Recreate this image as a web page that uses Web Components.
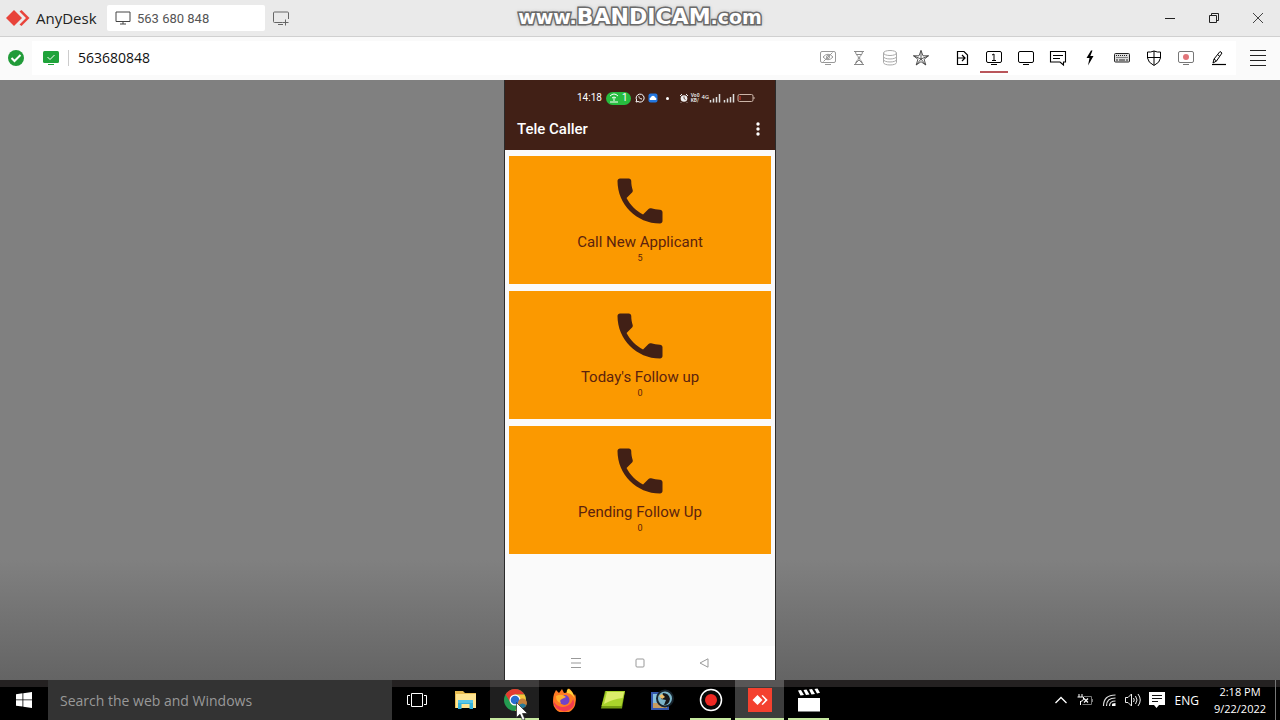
<!DOCTYPE html>
<html lang="en">
<head>
<meta charset="utf-8">
<title>AnyDesk - 563680848</title>
<style>
html, body { margin: 0; height: 100%; }
body { font-family: "Open Sans", "Noto Sans", sans-serif; color: #111; overflow: hidden; background: #808080; }
</style>
</head>
<body>
<remote-desktop></remote-desktop>
<script>
const ICONS = {
  logo: ['0 0 24 16', '<path d="M8 0l8 8-8 8-8-8z" fill="#e8433a"/><path d="M13.500 1.500l2-1.500 8 8-8 8-2-1.500L20 8z" fill="#e8433a"/>'],
  logowhite: ['0 0 24 24', '<path d="M0 0h24v24H0z" fill="#f4412f"/><path d="M9.500 7l5 5-5 5-5-5zM13.500 7.800l1.200-.8 5 5-5 5-1.200-.8L17.300 12z" fill="#fff"/>'],
  monitor: ['0 0 16 14', '<path d="M1 1h14v9.500H1zM8 10.500V13M5 13h6" fill="none" stroke="#444"/>'],
  newtab: ['0 0 16 15', '<path d="M9.500 11.500H1.500a1 1 0 0 1-1-1V2a1 1 0 0 1 1-1h13a1 1 0 0 1 1 1v6M5 13.500h5M12.500 8.500v6M9.500 11.500h6" fill="none" stroke="#666"/>'],
  minimise: ['0 0 12 12', '<path d="M1 6.500h10" stroke="#222" fill="none"/>'],
  restore: ['0 0 12 12', '<path d="M1.500 3.500h7v7h-7zM3.500 3.500v-2h7v7h-2" stroke="#222" fill="none"/>'],
  close: ['0 0 12 12', '<path d="M1 1l10 10M11 1L1 11" stroke="#444" fill="none"/>'],
  ok: ['0 0 16 16', '<circle cx="8" cy="8" r="8" fill="#219b39"/><path d="M3.500 8l3 3 6-6" fill="none" stroke="#fff" stroke-width="2"/>'],
  session: ['0 0 16 14', '<rect width="16" height="12" rx="1.500" fill="#1fa33a"/><path d="M5 13.500h6" stroke="#1fa33a"/><path d="M4.500 6l2.500 2.500L11.500 4" fill="none" stroke="#fff"/>'],
  hide: ['0 0 18 18', '<g fill="none" stroke="#999"><rect x="1.500" y="2.500" width="15" height="11" rx="1.500"/><path d="M6 15.500h6M4 8q5-5.500 10 0-5 5.500-10 0M4.500 12.500l9-9"/><circle cx="9" cy="8" r="1.500"/></g>'],
  hourglass: ['0 0 18 18', '<g fill="none" stroke="#888"><path d="M4 2.500h10M4 15.500h10M5.500 2.500c0 4 3 4 3 6.500s-3 2.500-3 6.500M12.500 2.500c0 4-3 4-3 6.500s3 2.500 3 6.500M7 5.500h4M6 14l3-3 3 3"/></g>'],
  disks: ['0 0 18 18', '<g fill="none" stroke="#aaa"><ellipse cx="9" cy="4" rx="6.500" ry="2.500"/><path d="M2.500 4v9.500c0 3.300 13 3.300 13 0V4M2.500 7.500c0 3.300 13 3.300 13 0M2.500 10.500c0 3.300 13 3.300 13 0"/></g>'],
  star: ['0 0 18 18', '<path d="M9 1.500l2 5.300h5.500l-4.400 3.500 1.700 5.700L9 12.700 4.200 16l1.700-5.700L1.500 6.800H7zM9 1.500v8.500l7.500-3.200M9 10l4.800 6M9 10l-4.800 6M9 10L1.500 6.800" fill="none" stroke="#444" stroke-width=".9"/>'],
  file: ['0 0 18 18', '<path d="M4.500 2.500h6.500l3.500 3.500v9.500h-10zM5 9h7M9 6l3 3-3 3" fill="none" stroke="#000" stroke-width="1.200"/>'],
  screenone: ['0 0 18 18', '<rect x="1.500" y="2.500" width="15" height="11" rx="1.500" fill="none" stroke="#000"/><path d="M6 15.500h6M7 6l2-1v6.500M7 11.500h4" fill="none" stroke="#000"/>'],
  screen: ['0 0 18 18', '<rect x="1.500" y="2.500" width="15" height="11" rx="1.500" fill="none" stroke="#000"/><path d="M6 15.500h6" stroke="#000"/>'],
  chat: ['0 0 18 18', '<path d="M1.500 2.500h15v10.500h-2v3l-3.500-3H1.500zM4 6.500h10M4 9.500h7" fill="none" stroke="#000" stroke-width="1.100"/>'],
  bolt: ['0 0 18 18', '<path d="M10 1.500L5.500 9h3L7 16.500 12.500 7H9.300l2.200-5.500z" fill="#000"/>'],
  keyboard: ['0 0 18 18', '<rect x="1.500" y="4.500" width="15" height="8.500" rx="1" fill="#ddd" stroke="#222"/><path d="M3 6.500h12M3.500 8.500h12" stroke="#222" stroke-dasharray="1 1"/><path d="M3 11h2M6 11h6M13 11h2" stroke="#222"/>'],
  shield: ['0 0 18 18', '<path d="M9 2Q5.500 3.500 2.500 3v6q.5 4.500 6.500 7.500 6-3 6.500-7.500V3Q12.500 3.500 9 2zM9 2v14M2.500 8.500h13" fill="none" stroke="#000"/>'],
  record: ['0 0 18 18', '<rect x="1.500" y="2.500" width="15" height="11" rx="1.500" fill="none" stroke="#777"/><path d="M6 15.500h6" stroke="#777"/><circle cx="9" cy="8" r="3" fill="#e2757a"/>'],
  pen: ['0 0 18 18', '<path d="M3 15.500h14" stroke="#000" stroke-width="1.200"/><path d="M4 14l1-4 6-7.500 2 1.500-5.500 8z M5 10l2.500 2M9 6l1.500 1" fill="none" stroke="#000"/>'],
  menu: ['0 0 16 16', '<path d="M0 .5h16M0 5.500h16M0 10.500h16M0 15.500h16" stroke="#222"/>'],
  hotspot: ['0 0 10 10', '<path d="M1 3q4-4 8 0M3 5q2-2 4 0M5 5v3M1 9h8" fill="none" stroke="#fff"/>'],
  whatsapp: ['0 0 10 10', '<path d="M1 9l.6-2A4 4 0 1 1 3 8.500z" fill="none" stroke="#fff"/><path d="M3.500 3q-.5 2 3 3.700l.5-1-1-.7-.6.4-1-1 .3-.6z" fill="#fff"/>'],
  cloud: ['0 0 10 10', '<rect x=".5" y=".5" width="9" height="9" rx="2" fill="#2376df"/><path d="M2 7a1.500 1.500 0 0 1 .8-2.500 2.300 2.300 0 0 1 4.400 0A1.500 1.500 0 0 1 8 7z" fill="#fff"/>'],
  alarm: ['0 0 10 10', '<circle cx="5" cy="5.500" r="3.300" fill="#eee"/><path d="M1 3l2-2M7 1l2 2M2.500 9L2 9.500M7.500 9l.5.5" stroke="#eee"/><path d="M5 3.500v2l1.500 1" stroke="#412016" fill="none" stroke-width=".8"/>'],
  signal: ['0 0 12 10', '<path d="M1.500 7v2.500M4.500 5.500v4M7.500 4v5.500M10.500 1v8.500" stroke="#ddd" stroke-width="1.500"/>'],
  battery: ['0 0 18 10', '<rect x="1" y="1.500" width="15" height="7" rx="1.500" fill="none" stroke="#ccb5a8"/><path d="M3 3v4" stroke="#e13a2b"/><path d="M17 4v2" stroke="#ccb5a8"/>'],
  more: ['0 0 6 14', '<g fill="#fff"><circle cx="3" cy="2" r="1.700"/><circle cx="3" cy="7" r="1.700"/><circle cx="3" cy="12" r="1.700"/></g>'],
  phone: ['0 0 24 24', '<path fill="#412016" d="M6.620 10.790c1.440 2.830 3.760 5.140 6.590 6.590l2.200-2.200c.27-.27.67-.36 1.020-.24 1.120.37 2.330.57 3.570.57.55 0 1 .45 1 1V20c0 .55-.45 1-1 1-9.390 0-17-7.610-17-17 0-.55.45-1 1-1h3.500c.55 0 1 .45 1 1 0 1.250.2 2.450.57 3.570.11.35.03.74-.25 1.020l-2.200 2.200z"/>'],
  recents: ['0 0 10 10', '<path d="M0 .5h10M0 5h10M0 9.500h10" stroke="#999"/>'],
  home: ['0 0 10 10', '<rect x="1" y="1" width="8" height="8" rx="1" fill="none" stroke="#999"/>'],
  back: ['0 0 10 10', '<path d="M9 .8v8.400L1 5z" fill="none" stroke="#999"/>'],
  windows: ['0 0 16 16', '<path d="M0 2.200l6.500-.9v6.200H0zM7.300 1.200L16 0v7.500H7.300zM0 8.300h6.500v6.300L0 13.700zM7.300 8.300H16V16l-8.700-1.200z" fill="#fff"/>'],
  taskview: ['0 0 20 16', '<path d="M4.500 1.500h11v13h-11zM3 3.500H.5v9H3M17 3.500h2.500v9H17" fill="none" stroke="#fff"/>'],
  explorer: ['0 0 24 22', '<path d="M1 2h8l2 2h11v15H1z" fill="#e9bd51"/><path d="M2 5h20v14H2z" fill="#ffe592"/><path d="M4 20v-8q0-1 1-1h13q1 0 1 1v8h-3.500v-5h-8v5z" fill="#35b2dc"/><path d="M4 11h15v3H4z" fill="#56c6e8"/>'],
  chrome: ['0 0 24 24', '<circle cx="12" cy="12" r="11" fill="#249b50"/><path d="M2.500 6.500A11 11 0 0 1 21.500 6.500H12L7.500 14.500z" fill="#e43c30"/><path d="M21.500 6.500A11 11 0 0 1 12 23l5-8-5-8.500z" fill="#f7c53a"/><circle cx="12" cy="12" r="5.500" fill="#fff"/><circle cx="12" cy="12" r="4.300" fill="#286dcf"/><circle cx="19.500" cy="15" r="4.500" fill="#c6803b"/><path d="M16 17q3.500-3 7 0-1 3-3.500 3T16 17" fill="#267a9c"/>'],
  firefox: ['0 0 24 24', '<path d="M2 6l2-4 3 3 3-4 2 4q2 0 3-1l2-3.500q4 3 5 7.500l1-2q1.500 4 .5 8.500A11 11 0 0 1 1 13Q1 9 2 6z" fill="#ff7a22"/><path d="M1.200 12q2 6 9 7 8 0 11-8 4 10-8.700 12.500Q1.500 22 1.200 12z" fill="#f23c50"/><path d="M16 .5q6 4 6.500 10-2-5-7.500-5.500-1-2 1-4.500z" fill="#ffd439"/><circle cx="12.500" cy="12" r="5" fill="#7143c9"/><path d="M4 8q6-3 10 1l-4 2q-3 1-1 4-5-1-5-7z" fill="#ffb02e"/>'],
  notes: ['0 0 26 22', '<path d="M5 2h20l-3 17.500H1z" fill="#759c13"/><path d="M6 2h19l-3.500 15H1.500z" fill="#a9d32b"/><path d="M7 3h17l-1.500 6Q13 10 4 15z" fill="#dcec6a"/>'],
  viewer: ['0 0 24 24', '<path d="M1 4h18v18H1z" fill="#3457ad"/><path d="M3 6h14v14H3z" fill="#86bfdc"/><path d="M3 15h14v5H3z" fill="#c79c61"/><circle cx="15" cy="10.500" r="8" fill="#7bb5c9" stroke="#17242e" stroke-width="2"/><path d="M13 5q6 0 7 6-1 6-6 6l2-5-5-1z" fill="#161719"/><path d="M9 8l3-2 3 3-3 2z" fill="#edc06b"/>'],
  recorder: ['0 0 24 24', '<circle cx="12" cy="12" r="10.500" fill="#090909" stroke="#fff" stroke-width="1.500"/><circle cx="12" cy="12" r="6" fill="#ef2823"/>'],
  clapper: ['0 0 24 24', '<path d="M1 10h22v13.500H1zM1 2.500l3-.5 3 5-3.500.5zM6.500 2l3-.4 3 5-3.500.4zM12 1.500l3-.4 3 5-3.500.4zM17.500 1l3-.4L23 4.800l-3 .7z" fill="#fff"/>'],
  chevron: ['0 0 16 16', '<path d="M2.500 11L8 5.500l5.500 5.500" fill="none" stroke="#fff" stroke-width="1.300"/>'],
  power: ['0 0 16 16', '<path d="M2 2v3M5 2v3M.5 5h6v2q0 2-3 2.500V13M3.500 9v3" fill="none" stroke="#fff"/><path d="M7 4.500h7.500v8H5.500M15.500 7v3" fill="none" stroke="#777"/><path d="M7 6.500l4 4M11 6.500l-4 4" stroke="#fff" stroke-width="1.200"/>'],
  wifi: ['0 0 16 16', '<g fill="none" stroke="#ddd" stroke-width="1.200"><path d="M2.500 14Q2.500 3 14.500 3M5.500 14Q5.500 6 14.500 6M8.500 14q0-5 6-5"/></g><path d="M11 14v-1.500q0-1.500 3.500-1.500v3z" fill="#fff"/>'],
  speaker: ['0 0 16 16', '<g fill="none" stroke="#eee"><path d="M.5 5.500h2.500l3.500-3.500v12L3 10.500H.5zM8.500 6q1.500 2 0 4M10.500 4q3 4 0 8M13 2q4.500 6 0 12"/></g>'],
  message: ['0 0 16 16', '<path d="M0 0h16v13h-6l-2.500 3L5 13H0z" fill="#fff"/><path d="M3 3.500h10M3 6.500h10M3 9.500h6" stroke="#111"/>'],
  cursor: ['0 0 12 19', '<path d="M.5 .5v15l3.500-3.200 2.500 6 2.500-1-2.500-5.800h5z" fill="#fff" stroke="#222" stroke-width=".7"/>']
};

const define = (tag, markup, setup) => {
  const template = document.createElement('template');
  template.innerHTML = markup;
  customElements.define(tag, class extends HTMLElement {
    constructor() {
      super();
      this.attachShadow({ mode: 'open' }).append(template.content.cloneNode(true));
    }
    connectedCallback() { if (setup) setup(this, this.shadowRoot); }
  });
};

const makeIcon = (name) => {
  const icon = document.createElement('ui-icon');
  icon.setAttribute('name', name);
  return icon;
};

define('ui-icon', '<style>:host{display:inline-flex;flex:none}svg{display:block;width:var(--w);height:var(--h)}</style><svg aria-hidden="true"></svg>', (el, root) => {
  const [box, art] = ICONS[el.getAttribute('name')];
  const [, , w, h] = box.split(' ');
  const svg = root.querySelector('svg');
  svg.setAttribute('viewBox', box);
  svg.innerHTML = art;
  const size = el.getAttribute('size');
  svg.style.setProperty('--w', (size || w) + 'px');
  svg.style.setProperty('--h', (size || h) + 'px');
});

define('icon-button', `<style>
:host{display:flex;flex:none;width:var(--cell,32px)}
button{all:unset;box-sizing:border-box;display:grid;place-items:center;width:100%;height:100%}
:host([active]) button{border-bottom:2px solid #b9555a;border-top:2px solid transparent;margin:0 2px}
</style><button type="button"></button>`, (el, root) => {
  const button = root.querySelector('button');
  button.setAttribute('aria-label', el.getAttribute('label'));
  button.replaceChildren(makeIcon(el.getAttribute('icon')));
});

define('brand-watermark', `<style>
:host{position:absolute;left:50%;top:0;transform:translateX(-50%);white-space:nowrap;font:bold 19px/34px "DejaVu Sans",sans-serif;color:#fff;-webkit-text-stroke:3px #666;paint-order:stroke fill;text-shadow:0 0 4px #777}
b{font-size:22px}
</style>www.<b>BANDICAM</b>.com`);

define('title-bar', `<style>
:host{position:relative;display:flex;align-items:center;height:36px;background:#eaeaea;border-bottom:1px solid #d0d0d0;flex:none}
.brand{display:flex;align-items:center;gap:6px;padding-left:6px;width:107px;box-sizing:border-box;font-size:15px;line-height:20px;color:#222}
.tab{all:unset;box-sizing:border-box;display:flex;align-items:center;gap:6px;width:158px;height:26px;padding-left:8px;background:#fff;border-radius:2px;font:13px Roboto,sans-serif;color:#555}
.window{display:flex;height:36px;margin-left:auto;--cell:44px}
</style>
<div class="brand"><ui-icon name="logo"></ui-icon><span>AnyDesk</span></div>
<button class="tab" type="button"><ui-icon name="monitor"></ui-icon>563 680 848</button>
<icon-button icon="newtab" label="New tab"></icon-button>
<brand-watermark></brand-watermark>
<div class="window"><icon-button icon="minimise" label="Minimise"></icon-button><icon-button icon="restore" label="Restore"></icon-button><icon-button icon="close" label="Close"></icon-button></div>`);

define('address-bar', `<style>
:host{display:flex;align-items:center;box-sizing:border-box;height:43px;padding-bottom:1px;background:#fafafa;flex:none}
.state{width:32px;display:grid;place-items:center}
.field{flex:1;display:flex;align-items:center;height:34px;background:#fff;padding-left:11px;padding-right:2px}
.rule{width:1px;height:16px;background:#ccc;margin:0 9px}
input{all:unset;flex:1;min-width:0;font-size:14px;line-height:20px;color:#111}
.group{display:flex;height:30px}
.dim{--cell:31px;margin-right:10px}
.end{--cell:44px;height:34px}
</style>
<span class="state"><ui-icon name="ok"></ui-icon></span>
<div class="field"><ui-icon name="session"></ui-icon><span class="rule"></span><input aria-label="Remote address" value="563680848">
<div class="group dim"><icon-button icon="hide" label="Privacy"></icon-button><icon-button icon="hourglass" label="Waiting"></icon-button><icon-button icon="disks" label="Storage"></icon-button><icon-button icon="star" label="Favourite"></icon-button></div>
<div class="group"><icon-button icon="file" label="File transfer"></icon-button><icon-button active icon="screenone" label="Monitor one"></icon-button><icon-button icon="screen" label="Display"></icon-button><icon-button icon="chat" label="Chat"></icon-button><icon-button icon="bolt" label="Actions"></icon-button><icon-button icon="keyboard" label="Keyboard"></icon-button><icon-button icon="shield" label="Permissions"></icon-button><icon-button icon="record" label="Record"></icon-button><icon-button icon="pen" label="Whiteboard"></icon-button></div></div>
<icon-button class="end" icon="menu" label="Menu"></icon-button>`);

define('call-card', `<style>
:host{display:block}
button{all:unset;box-sizing:border-box;display:flex;flex-direction:column;align-items:center;width:100%;padding:15px 0 20px;background:#fb9900;color:#5b230e}
.label{font-size:15px;line-height:20px;margin-top:1px}
.count{font-size:9px;line-height:12px}
</style><button type="button"><ui-icon name="phone" size="60"></ui-icon><span class="label"><slot></slot></span><span class="count"><slot name="count"></slot></span></button>`);

define('phone-status', `<style>
:host{display:flex;align-items:center;height:36px;padding:0 20px 0 72px;color:#fff;font-size:10px;line-height:12px}
.hot{display:flex;align-items:center;gap:3px;height:13px;padding:0 3px;margin:0 4px;border-radius:7px;background:#27bd3f}
.apps{display:flex;align-items:center;gap:3px}
.dot{width:3px;height:3px;border-radius:50%;background:#fff;margin-left:8px}
.net{display:flex;align-items:center;gap:2px;margin-left:auto}
.rate{display:grid;font-size:5px;line-height:5px;font-weight:700;color:#ddd}
.cell{display:flex;align-items:center}
.cell small{font-size:6px;line-height:8px;align-self:start}
</style>
<span>14:18</span><span class="hot"><ui-icon name="hotspot"></ui-icon>1</span><span class="apps"><ui-icon name="whatsapp"></ui-icon><ui-icon name="cloud"></ui-icon></span><span class="dot"></span>
<span class="net"><ui-icon name="alarm"></ui-icon><span class="rate"><span>Vo0</span><span>KB/</span></span><span class="cell"><small>4G</small><ui-icon name="signal"></ui-icon></span><ui-icon name="signal"></ui-icon><ui-icon name="battery"></ui-icon></span>`);

define('phone-screen', `<style>
:host{display:flex;flex-direction:column;box-sizing:border-box;width:272px;min-height:100%;background:#fafafa;border:solid #2b2b2b;border-width:0 1px;font-family:Roboto,sans-serif}
header{background:#412016;color:#fff;padding-bottom:8px}
.title{display:flex;align-items:center;justify-content:space-between;height:26px;padding:0 8px 0 12px;--cell:18px}
h1{margin:0;font-size:15px;line-height:20px;font-weight:500}
main{flex:1;display:flex;flex-direction:column;gap:7px;padding:6px 4px}
nav{display:flex;align-items:center;justify-content:center;height:34px;background:#fff;--cell:64px}
</style>
<header><phone-status></phone-status><div class="title"><h1>Tele Caller</h1><icon-button icon="more" label="More"></icon-button></div></header>
<main><call-card>Call New Applicant<span slot="count">5</span></call-card><call-card>Today's Follow up<span slot="count">0</span></call-card><call-card>Pending Follow Up<span slot="count">0</span></call-card></main>
<nav aria-label="Phone navigation"><icon-button icon="recents" label="Recents"></icon-button><icon-button icon="home" label="Home"></icon-button><icon-button icon="back" label="Back"></icon-button></nav>`);

define('task-item', `<style>
:host{display:block;position:relative;width:49px;flex:none}
button{all:unset;box-sizing:border-box;display:grid;place-items:center;width:100%;height:100%}
.line{display:none}
:host([open]) .line{display:block;position:absolute;left:4px;right:4px;bottom:0;height:2px;background:#c6e8a0}
:host([current]) .line{left:0;right:0}
:host([current]){background:rgba(255,255,255,.12)}
:host([bright]){background:rgba(255,255,255,.24)}
::slotted(ui-icon){position:absolute;left:26px;top:22px}
</style><button type="button"></button><span class="line"></span><slot></slot>`, (el, root) => {
  const button = root.querySelector('button');
  button.setAttribute('aria-label', el.getAttribute('label'));
  button.replaceChildren(makeIcon(el.getAttribute('icon')));
});

define('system-tray', `<style>
:host{display:flex;align-items:center;margin-left:auto;color:#fff;font-size:12px;line-height:17px;--cell:24px}
.lang{margin:0 11px 0 6px}
.clock{display:grid;text-align:center;width:60px;margin-right:5px;font-size:11px}
.edge{align-self:stretch;border-left:1px solid #777;width:4px}
</style>
<icon-button icon="chevron" label="Hidden icons"></icon-button><icon-button icon="power" label="Battery"></icon-button><icon-button icon="wifi" label="Network"></icon-button><icon-button icon="speaker" label="Volume"></icon-button><icon-button icon="message" label="Notifications"></icon-button><span class="lang">ENG</span><span class="clock"><span>2:18 PM</span><span>9/22/2022</span></span><span class="edge"></span>`);

define('task-bar', `<style>
:host{display:flex;height:40px;flex:none;background:linear-gradient(#242121 7px,#000 7px)}
input{all:unset;box-sizing:border-box;width:344px;padding:0 12px;background:#333;font-size:14px;color:#aaa}
input::placeholder{color:#999;opacity:1}
.start{--cell:48px}
</style>
<icon-button class="start" icon="windows" label="Start"></icon-button><input type="search" aria-label="Search" placeholder="Search the web and Windows">
<task-item icon="taskview" label="Task view"></task-item><task-item icon="explorer" label="File Explorer"></task-item><task-item icon="chrome" label="Chrome" open current><ui-icon name="cursor"></ui-icon></task-item><task-item icon="firefox" label="Firefox"></task-item><task-item icon="notes" label="Notes"></task-item><task-item icon="viewer" label="Photo viewer"></task-item><task-item icon="recorder" label="Recorder" open></task-item><task-item icon="logowhite" label="AnyDesk" open current bright></task-item><task-item icon="clapper" label="Movies" open></task-item>
<system-tray></system-tray>`);

define('remote-desktop', `<style>
:host{display:flex;flex-direction:column;min-height:100vh}
main{flex:1;display:flex;justify-content:center;background:linear-gradient(#808080 80%,#646464)}
</style><title-bar></title-bar><address-bar></address-bar><main><phone-screen></phone-screen></main><task-bar></task-bar>`);
</script>
</body>
</html>
